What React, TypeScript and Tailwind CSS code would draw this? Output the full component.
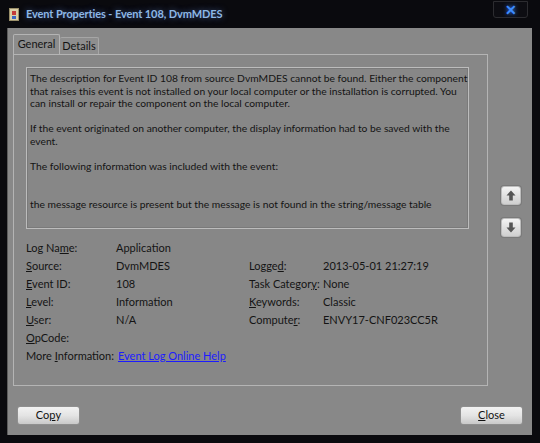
const left = [
  { label: <>Log Na<u>m</u>e:</>, value: 'Application' },
  { label: <><u>S</u>ource:</>, value: 'DvmMDES' },
  { label: <><u>E</u>vent ID:</>, value: '108' },
  { label: <><u>L</u>evel:</>, value: 'Information' },
  { label: <><u>U</u>ser:</>, value: 'N/A' },
  { label: <><u>O</u>pCode:</>, value: '' },
]

const right = [
  { label: <>Logge<u>d</u>:</>, value: '2013-05-01 21:27:19' },
  { label: <>Task Categor<u>y</u>:</>, value: 'None' },
  { label: <><u>K</u>eywords:</>, value: 'Classic' },
  { label: <>Compute<u>r</u>:</>, value: 'ENVY17-CNF023CC5R' },
]

function Row({ label, value, w }: { label: React.ReactNode; value: string; w: string }) {
  return (
    <div className="flex h-[18px] items-center whitespace-nowrap">
      <span className={w}>{label}</span>
      <span>{value}</span>
    </div>
  )
}

function ArrowButton({ down }: { down?: boolean }) {
  return (
    <button className="flex h-[19px] w-[20px] items-center justify-center rounded-[3px] border border-[#bdbdbd] bg-gradient-to-b from-[#f4f4f4] to-[#cfcfcf] shadow-[0_0_0_1px_#7a7a7a]">
      <svg width="10" height="11" viewBox="0 0 10 11" className={down ? 'rotate-180' : ''}>
        <path d="M5 0.5 L9.5 5.5 L6.8 5.5 L6.8 10.5 L3.2 10.5 L3.2 5.5 L0.5 5.5 Z" fill="#555" />
      </svg>
    </button>
  )
}

function DialogButton({ children }: { children: React.ReactNode }) {
  return (
    <button className="flex h-[19px] w-[63px] items-center justify-center rounded-[3px] border border-[#8f8f8f] bg-gradient-to-b from-[#f2f2f2] via-[#e4e4e4] to-[#c9c9c9] text-[11px] text-[#111]">
      {children}
    </button>
  )
}

export default function App() {
  return (
    <div className="flex h-[443px] w-[540px] flex-col bg-[#0a0a0e] font-['Lato',sans-serif] text-[11px] text-[#141414]">
      {/* title bar */}
      <div className="flex h-[28px] items-start">
        <div className="ml-[9px] mt-[8px] flex h-[13px] w-[10px] flex-col items-center justify-center border border-[#9a8f6a] bg-[#d9cfa8]">
          <div className="h-[4px] w-[4px] bg-[#c23a3a]" />
          <div className="mt-[1px] h-[3px] w-[4px] bg-[#3a64c2]" />
        </div>
        <span className="ml-[7px] mt-[6px] whitespace-nowrap text-[11px] font-bold tracking-[-0.1px] text-[#8db7e6] [text-shadow:0_0_6px_rgba(120,170,255,0.5)]">
          Event Properties - Event 108, DvmMDES
        </span>
        <div className="ml-auto mr-[12px] mt-[1px] flex h-[17px] w-[35px] items-center justify-center rounded-b-[3px] border border-[#2c2c30] bg-[#0d0d12]">
          <span className="text-[14px] font-bold leading-none text-[#3d8cff] [text-shadow:0_0_4px_#2f7bff]">✕</span>
        </div>
      </div>

      {/* client area */}
      <div className="mx-[7px] flex h-[407px] w-[525px] flex-col border-l border-[#5c5c5c] bg-[#888888]">
        <div className="flex">
          <div className="ml-[5px] flex w-[475px] flex-col">
            {/* tabs */}
            <div className="mt-[7px] flex h-[19px] items-end">
              <div className="flex h-[20px] w-[47px] items-center justify-center rounded-t-[2px] border border-b-0 border-[#b4b4b4] bg-[#8c8c8c]">
                General
              </div>
              <div className="flex h-[17px] w-[39px] items-center justify-center rounded-t-[2px] border border-b-0 border-l-0 border-[#a6a6a6] bg-[#8e8e8e]">
                Details
              </div>
            </div>
            {/* tab panel */}
            <div className="flex h-[332px] flex-col border border-[#b4b4b4] bg-[#878787] pl-[12px] pr-[18px]">
              <div className="mt-[12px] h-[162px] whitespace-nowrap border border-[#bcbcbc] px-[3px] pt-[4px] text-[10.3px] leading-[12.5px] shadow-[inset_0_0_0_1px_#7a7a7a]">
                <p>
                  The description for Event ID 108 from source DvmMDES cannot be found. Either the component
                  <br />
                  that raises this event is not installed on your local computer or the installation is corrupted. You
                  <br />
                  can install or repair the component on the local computer.
                </p>
                <p className="mt-[12.5px]">
                  If the event originated on another computer, the display information had to be saved with the
                  <br />
                  event.
                </p>
                <p className="mt-[12.5px]">The following information was included with the event:</p>
                <p className="mt-[25.5px]">
                  the message resource is present but the message is not found in the string/message table
                </p>
              </div>

              <div className="mt-[10px] flex">
                <div className="flex w-[223px] flex-col">
                  {left.map((r, i) => (
                    <Row key={i} label={r.label} value={r.value} w="w-[90px]" />
                  ))}
                  <div className="flex h-[18px] items-center whitespace-nowrap">
                    <span className="w-[92px]">
                      More <u>I</u>nformation:
                    </span>
                    <span className="text-[#1c1cff] underline">Event Log Online Help</span>
                  </div>
                </div>
                <div className="mt-[18px] flex flex-col">
                  {right.map((r, i) => (
                    <Row key={i} label={r.label} value={r.value} w="w-[74px]" />
                  ))}
                </div>
              </div>
            </div>
          </div>
          {/* arrows */}
          <div className="ml-[13px] mt-[158px] flex flex-col gap-[13px]">
            <ArrowButton />
            <ArrowButton down />
          </div>
        </div>

        <div className="mt-[20px] flex items-center px-[9px]">
          <DialogButton>
            Co<u>p</u>y
          </DialogButton>
          <div className="ml-auto">
            <DialogButton>
              <u>C</u>lose
            </DialogButton>
          </div>
        </div>
      </div>
    </div>
  )
}
